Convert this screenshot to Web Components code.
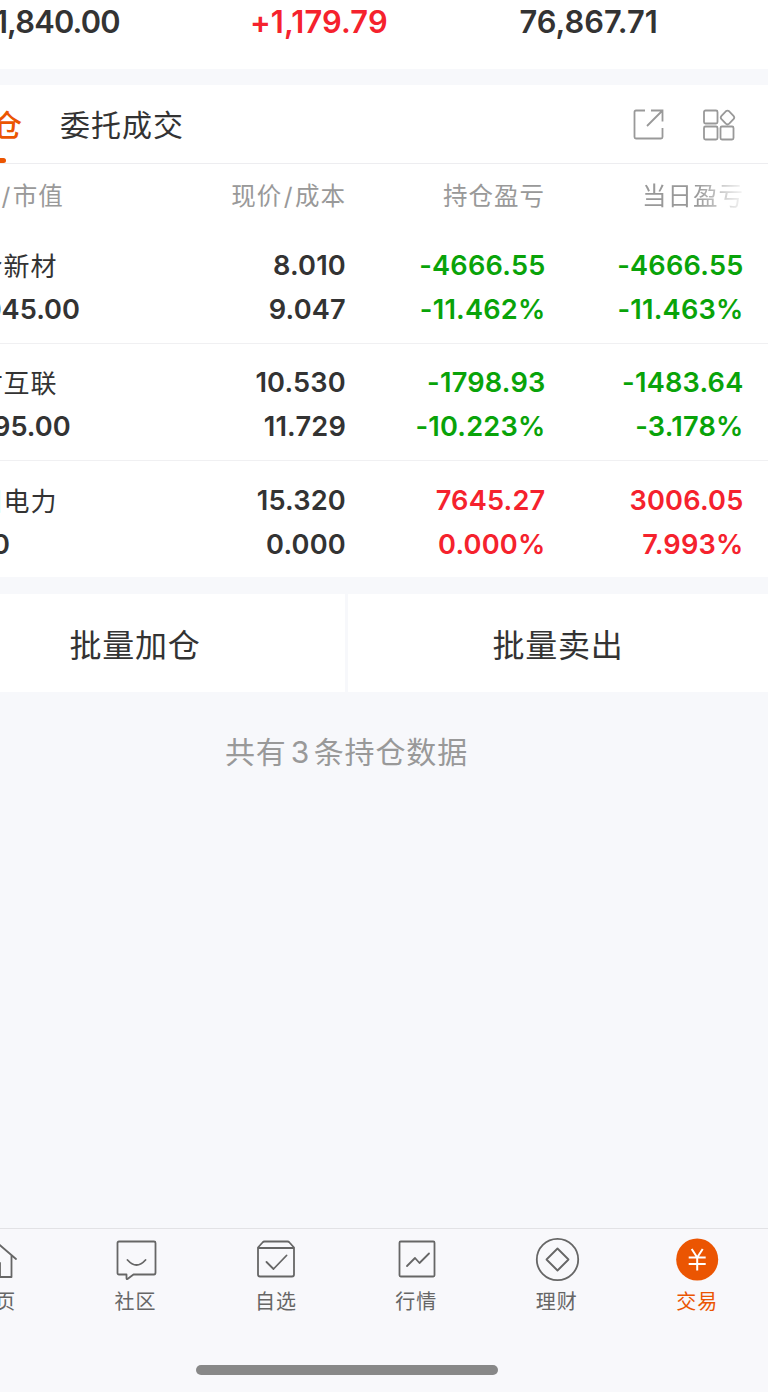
<!DOCTYPE html>
<html lang="zh-CN">
<head>
<meta charset="UTF-8">
<meta name="viewport" content="width=device-width, initial-scale=1">
<title>持仓</title>
<style>
    html, body {
        margin: 0;
        height: 1392px;
        overflow: hidden;
    }
    body {
        background: #f7f8fb;
        color: #333;
        font-family: Inter, "Noto Sans CJK SC", sans-serif;
    }
</style>
</head>
<body>
<trade-app></trade-app>

<script>
class BaseElement extends HTMLElement {
    constructor() {
        super();
        this.$shadow = this.attachShadow({ mode: 'open' });
    }

    connectedCallback() {
        this.$shadow.innerHTML = `<style>${this.getStyle()}</style>${this.getMarkup()}`;
    }
}

class AssetSummary extends BaseElement {
    getMarkup() {
        return `
            <span class="value market">91,840.00</span>
            <span class="value profit">+1,179.79</span>
            <span class="value">76,867.71</span>
        `;
    }

    getStyle() {
        return `
            :host {
                display: grid;
                grid-template-columns: 250px 269.500px auto;
                height: 69px;
                background: #fff;
                font-size: 30.800px;
                font-weight: 600;
                line-height: 43px;
            }
            .value { white-space: nowrap; }
            .market { margin-left: -24px; letter-spacing: -0.800px; }
            .profit { color: #f5222d; letter-spacing: 0.150px; }
        `;
    }
}

class PositionTabs extends BaseElement {
    getMarkup() {
        return `
            <span class="tab active">持仓<i></i></span>
            <span class="tab">委托成交</span>
            <div class="tools">
                <svg width="34" height="34" viewBox="0 0 34 34">
                    <path d="M13 2.500H4Q2.500 2.500 2.500 4V29Q2.500 30.500 4 30.500H29Q30.500 30.500 30.500 29V20M19 2.500H30.500V13.500M30 3L15 18"/>
                </svg>
                <svg width="34" height="34" viewBox="0 0 34 34">
                    <rect x="2" y="2.500" width="13.500" height="13" rx="1.500"/>
                    <rect x="2" y="18.500" width="13.500" height="13" rx="1.500"/>
                    <rect x="18.500" y="18.500" width="13" height="13" rx="1.500"/>
                    <path d="M23.800 3.300Q25.500 2 27.200 3.300L31.500 7.800Q33 9.500 31.500 11.200L27.200 15.700Q25.500 17.200 23.800 15.700L19.500 11.200Q18 9.500 19.500 7.800Z"/>
                </svg>
            </div>
        `;
    }

    getStyle() {
        return `
            :host {
                display: flex;
                height: 78px;
                background: #fff;
                border-bottom: 1px solid #ededf0;
                font-size: 30px;
                letter-spacing: 1px;
                line-height: 80px;
            }
            .tab { white-space: nowrap; }
            .active {
                position: relative;
                width: 62px;
                margin: 0 37px 0 -39px;
                color: #eb5502;
                font-weight: 500;
            }
            i {
                position: absolute;
                left: 15px;
                bottom: 0;
                width: 30px;
                height: 5px;
                border-radius: 3px;
                background: #eb5502;
            }
            .tools {
                display: flex;
                align-items: center;
                gap: 36px;
                margin-left: auto;
                padding: 2px 32px 0 0;
            }
            svg {
                fill: none;
                stroke: #999;
                stroke-width: 1.800;
            }
        `;
    }
}

class PositionTable extends BaseElement {
    getMarkup() {
        return `
            <div class="head">
                <span class="first">名称<b>/</b>市值</span>
                <span>现价<b>/</b>成本</span>
                <span>持仓盈亏</span>
                <span class="fade">当日盈亏</span>
            </div>
            <slot></slot>
        `;
    }

    getStyle() {
        return `
            :host {
                display: block;
                height: 413px;
                background: #fff;
            }
            .head {
                display: grid;
                grid-template-columns: 146px 200px 199px 199px;
                height: 62px;
                color: #999;
                font-size: 24.500px;
                letter-spacing: 1px;
                line-height: 65px;
                text-align: right;
                white-space: nowrap;
            }
            b {
                margin: 0 1.500px;
                font-weight: 400;
            }
            .first {
                margin-left: -51px;
                text-align: left;
            }
            .fade {
                -webkit-mask-image: linear-gradient(90deg, #000 76%, transparent 102%);
                mask-image: linear-gradient(90deg, #000 76%, transparent 102%);
            }
        `;
    }
}

class PositionRow extends BaseElement {
    getMarkup() {
        const get = name => this.getAttribute(name);

        return `
            <span class="name">${get('name')}</span>
            <span>${get('price')}</span>
            <span class="change">${get('profit')}</span>
            <span class="change">${get('day-profit')}</span>
            <span class="market">${get('market')}</span>
            <span>${get('cost')}</span>
            <span class="change">${get('rate')}</span>
            <span class="change">${get('day-rate')}</span>
        `;
    }

    getStyle() {
        return `
            :host {
                display: grid;
                box-sizing: border-box;
                grid-template-columns: 146px 200px 199.500px 198px;
                grid-template-rows: 44px 44px;
                height: 117.500px;
                padding-top: 17.500px;
                border-bottom: 1px solid #f0f0f2;
                color: #333;
                font-size: 27.200px;
                font-weight: 600;
                letter-spacing: 0.200px;
                line-height: 44px;
                text-align: right;
                white-space: nowrap;
            }
            :host(:last-child) { border: 0; }
            .name, .market {
                margin-left: -51px;
                letter-spacing: 0;
                text-align: left;
            }
            .name {
                margin-left: -50.500px;
                font-size: 26px;
                font-weight: 400;
                letter-spacing: 1px;
                line-height: 46px;
            }
            .change { color: #09a309; }
            :host([up]) .change { color: #f5222d; }
        `;
    }
}

class BatchActions extends BaseElement {
    getMarkup() {
        return `
            <button class="add">批量加仓</button>
            <button>批量卖出</button>
        `;
    }

    getStyle() {
        return `
            :host {
                display: grid;
                grid-template-columns: 345px 420px;
                gap: 3px;
                height: 98px;
            }
            button {
                margin: 0;
                border: 0;
                padding: 5px 0 0;
                background: #fff;
                color: #333;
                font: inherit;
                font-size: 32px;
                letter-spacing: 0.800px;
                line-height: 93px;
            }
            .add { padding-right: 75px; }
        `;
    }
}

const ICONS = {
    home: '<path d="M3 22L22 4L43 22M8 18V40H18V26H27V40H38.500V18"/>',
    community: '<path d="M5 4.500H40Q41.500 4.500 41.500 6V35.500Q41.500 37.500 40 37.500H19.500L13.500 42Q12.500 42.500 12.500 41V37.500H5Q3.500 37.500 3.500 36V6Q3.500 4.500 5 4.500ZM13.500 23Q22.500 33 31.500 23"/>',
    watch: '<path d="M4 10.500L8.500 5.500Q9.300 4.500 10.500 4.500H33.500Q34.700 4.500 35.500 5.500L40 10.500V37.500Q40 39.500 38 39.500H6Q4 39.500 4 37.500ZM4 11H40M12.500 25L19.500 32L32.500 18.500"/>',
    market: '<rect x="4.500" y="4.500" width="35" height="35" rx="1.200"/><path d="M12 29L20 21L24.500 26L34 16.500"/>',
    wealth: '<circle cx="22.500" cy="22.500" r="20.700"/><path d="M22.500 11.500L33.500 22.500L22.500 33.500L11.500 22.500Z"/>',
    trade: '<circle class="disc" cx="22.200" cy="22.500" r="21"/><path class="yen" d="M16.700 12L22.200 20.500L27.700 12M22.200 20.500V33.500M13.700 20.500H30.700M13.700 27H30.700"/>'
};

class NavItem extends BaseElement {
    getMarkup() {
        return `
            <svg width="45" height="45" viewBox="0 0 45 45">${ICONS[this.getAttribute('icon')]}</svg>
            <span><slot></slot></span>
        `;
    }

    getStyle() {
        return `
            :host {
                display: flex;
                flex-direction: column;
                align-items: center;
                color: #666;
                font-size: 20px;
                letter-spacing: 1px;
                line-height: 40px;
            }
            :host([active]) { color: #eb5502; }
            svg {
                margin-left: 1.600px;
                fill: none;
                stroke: #666;
                stroke-width: 1.800;
                stroke-linejoin: round;
                stroke-linecap: round;
            }
            .disc { fill: #eb5502; stroke: none; }
            .yen { stroke: #fff; stroke-width: 2; stroke-linecap: butt; }
        `;
    }
}

class NavBar extends BaseElement {
    getMarkup() {
        return `
            <nav><slot></slot></nav>
            <div class="home-indicator"></div>
        `;
    }

    getStyle() {
        return `
            :host {
                display: block;
                height: 163px;
                border-top: 1px solid #e2e2e5;
                background: #f8f8fb;
            }
            nav {
                display: grid;
                grid-template-columns: repeat(6, 140.400px);
                height: 128px;
                margin-left: -75px;
                padding-top: 8px;
            }
            .home-indicator {
                width: 302px;
                height: 10px;
                margin-left: 196px;
                border-radius: 5px;
                background: #888;
            }
        `;
    }
}

class TradeApp extends BaseElement {
    getMarkup() {
        return `
            <asset-summary></asset-summary>
            <position-tabs></position-tabs>
            <position-table>
                <position-row name="联合新材" market="36045.00" price="8.010" cost="9.047" profit="-4666.55" rate="-11.462%" day-profit="-4666.55" day-rate="-11.463%"></position-row>
                <position-row name="人时互联" market="15795.00" price="10.530" cost="11.729" profit="-1798.93" rate="-10.223%" day-profit="-1483.64" day-rate="-3.178%"></position-row>
                <position-row up name="四川电力" market="0.00" price="15.320" cost="0.000" profit="7645.27" rate="0.000%" day-profit="3006.05" day-rate="7.993%"></position-row>
            </position-table>
            <batch-actions></batch-actions>
            <p>共有<span>3</span>条持仓数据</p>
            <nav-bar>
                <nav-item icon="home">首页</nav-item>
                <nav-item icon="community">社区</nav-item>
                <nav-item icon="watch">自选</nav-item>
                <nav-item icon="market">行情</nav-item>
                <nav-item icon="wealth">理财</nav-item>
                <nav-item icon="trade" active>交易</nav-item>
            </nav-bar>
        `;
    }

    getStyle() {
        return `
            :host {
                display: flex;
                flex-direction: column;
                width: 768px;
                height: 1392px;
                overflow: hidden;
                background: #f7f8fb;
            }
            position-tabs { margin-top: 16px; }
            batch-actions { margin-top: 17px; }
            p {
                margin: 38px 75px 0 0;
                color: #999;
                font-size: 30px;
                letter-spacing: 0.900px;
                line-height: 44px;
                text-align: center;
            }
            p span { margin: 0 3.500px 0 4px; }
            nav-bar { margin-top: auto; }
        `;
    }
}

window.customElements.define('asset-summary', AssetSummary);
window.customElements.define('position-tabs', PositionTabs);
window.customElements.define('position-table', PositionTable);
window.customElements.define('position-row', PositionRow);
window.customElements.define('batch-actions', BatchActions);
window.customElements.define('nav-item', NavItem);
window.customElements.define('nav-bar', NavBar);
window.customElements.define('trade-app', TradeApp);
</script>
</body>
</html>
